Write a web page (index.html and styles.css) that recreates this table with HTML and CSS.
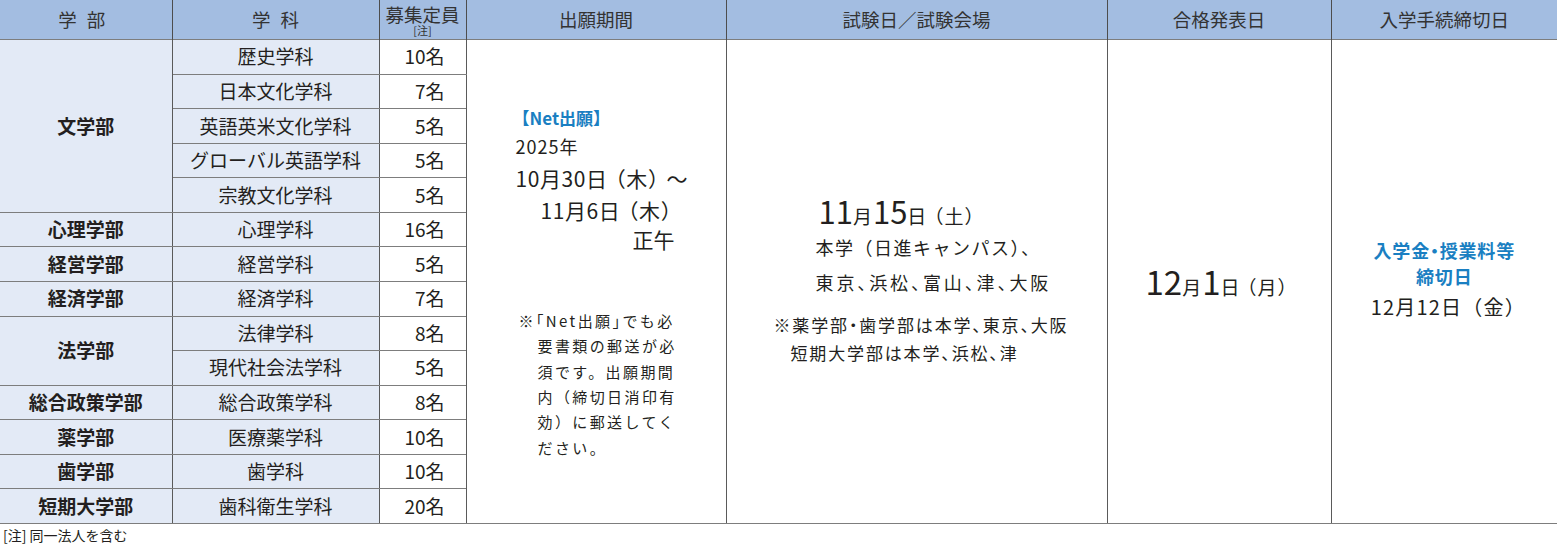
FILE: index.html
```html
<!DOCTYPE html>
<html lang="ja">
<head>
<meta charset="utf-8">
<title>入試日程</title>
<link rel="stylesheet" href="styles.css">
</head>
<body>
<table class="schedule">
  <colgroup>
    <col class="c-fac"><col class="c-dep"><col class="c-cap"><col class="c-app"><col class="c-exam"><col class="c-pass"><col class="c-proc">
  </colgroup>
  <thead>
    <tr>
      <th class="h-first h-spaced">学 部</th>
      <th class="h-spaced">学 科</th>
      <th class="h-cap"><span class="h-cap-main">募集定員</span><span class="h-cap-sub">[注]</span></th>
      <th>出願期間</th>
      <th>試験日／試験会場</th>
      <th>合格発表日</th>
      <th class="h-last">入学手続締切日</th>
    </tr>
  </thead>
  <tbody>
    <tr>
      <td class="fac" rowspan="5">文学部</td>
      <td class="dep">歴史学科</td>
      <td class="cap">10名</td>
      <td class="app" rowspan="14">
        <div class="app-box">
          <div class="net">【Net出願】</div>
          <div class="year">2025年</div>
          <div class="date1">10月30日<span class="pw">（木）</span>〜</div>
          <div class="date2">11月6日<span class="pw">（木）</span></div>
          <div class="noon">正午</div>
          <div class="app-note">
            <div class="note-first">※<span class="h">「</span>Net出願<span class="h">」</span>でも必</div>
            <div class="note-line">要書類の郵送が必</div>
            <div class="note-line">須です。出願期間</div>
            <div class="note-line">内（締切日消印有</div>
            <div class="note-line">効）に郵送してく</div>
            <div class="note-line">ださい。</div>
          </div>
        </div>
      </td>
      <td class="exam" rowspan="14">
        <div class="exam-box">
          <div class="exam-date"><span class="big">11</span>月<span class="big">15</span>日<span class="pw">（土）</span></div>
          <div class="loc loc1">本学（日進キャンパス）、</div>
          <div class="loc loc2">東京、浜松、富山、津、大阪</div>
          <div class="exam-note exam-note1">※薬学部・歯学部は本学、東京、大阪</div>
          <div class="exam-note exam-note2">短期大学部は本学、浜松、津</div>
        </div>
      </td>
      <td class="pass" rowspan="14">
        <span class="big-pass">12</span>月<span class="big-pass">1</span>日<span class="pw">（月）</span>
      </td>
      <td class="proc" rowspan="14">
        <div class="proc-blue">入学金<span class="h">・</span>授業料等</div>
        <div class="proc-blue">締切日</div>
        <div class="proc-date">12月12日（金）</div>
      </td>
    </tr>
    <tr><td class="dep">日本文化学科</td><td class="cap">7名</td></tr>
    <tr><td class="dep">英語英米文化学科</td><td class="cap">5名</td></tr>
    <tr><td class="dep">グローバル英語学科</td><td class="cap">5名</td></tr>
    <tr><td class="dep">宗教文化学科</td><td class="cap">5名</td></tr>
    <tr><td class="fac">心理学部</td><td class="dep">心理学科</td><td class="cap">16名</td></tr>
    <tr><td class="fac">経営学部</td><td class="dep">経営学科</td><td class="cap">5名</td></tr>
    <tr><td class="fac">経済学部</td><td class="dep">経済学科</td><td class="cap">7名</td></tr>
    <tr><td class="fac" rowspan="2">法学部</td><td class="dep">法律学科</td><td class="cap">8名</td></tr>
    <tr><td class="dep">現代社会法学科</td><td class="cap">5名</td></tr>
    <tr><td class="fac">総合政策学部</td><td class="dep">総合政策学科</td><td class="cap">8名</td></tr>
    <tr><td class="fac">薬学部</td><td class="dep">医療薬学科</td><td class="cap">10名</td></tr>
    <tr><td class="fac">歯学部</td><td class="dep">歯学科</td><td class="cap">10名</td></tr>
    <tr><td class="fac">短期大学部</td><td class="dep">歯科衛生学科</td><td class="cap">20名</td></tr>
  </tbody>
</table>
<p class="footnote">[注] 同一法人を含む</p>
</body>
</html>
```

FILE: styles.css
```css
html, body {
  margin: 0;
  padding: 0;
  background: #ffffff;
}

body {
  font-family: "Noto Sans CJK JP", "Noto Sans", sans-serif;
  color: #231f20;
}

.schedule {
  border-collapse: collapse;
  table-layout: fixed;
  width: 1557px;
}

.c-fac { width: 172px; }
.c-dep { width: 207px; }
.c-cap { width: 87px; }
.c-app { width: 260px; }
.c-exam { width: 381px; }
.c-pass { width: 224px; }
.c-proc { width: 226px; }

.schedule th {
  height: 39px;
  padding: 0;
  background: #a3bde1;
  color: #333333;
  font-weight: normal;
  font-size: 18.5px;
  line-height: 1;
  text-align: center;
  vertical-align: middle;
  border-left: 1px solid #4d4d4d;
  border-right: 1px solid #4d4d4d;
  border-top: none;
  border-bottom: none;
}

.schedule th.h-first { border-left: none; }
.schedule th.h-last { border-right: none; }

.schedule th.h-spaced {
  word-spacing: 6px;
}

.schedule th.h-first {
  padding-right: 8px;
}

.h-cap-main {
  display: block;
  font-size: 18.5px;
  line-height: 19px;
  padding-top: 1px;
}

.h-cap-sub {
  display: block;
  font-size: 11px;
  line-height: 12px;
}

.schedule tbody tr {
  height: 34.57px;
}

.schedule td {
  padding: 0;
  font-size: 19px;
  line-height: 1.2;
  text-align: center;
  vertical-align: middle;
  border-left: 1px solid #5a5a5a;
  border-right: 1px solid #5a5a5a;
  border-top: 1px solid #7d7d7d;
  border-bottom: 1px solid #7d7d7d;
}

.schedule td.fac {
  border-left: none;
  background: #e3eaf6;
  font-weight: bold;
}

.schedule td.dep {
  background: #e3eaf6;
}

.schedule td.cap {
  text-align: right;
  padding-right: 21px;
}

/* half-width punctuation */
.h {
  font-feature-settings: "halt";
}

/* full-width parentheses, slightly tightened */
.pw {
  margin: 0 -3px;
}

/* 出願期間 */
.schedule td.app {
  text-align: left;
  padding-left: 47px;
}

.net {
  color: #1a7fc2;
  font-weight: bold;
  font-size: 17px;
  line-height: 29px;
  margin-left: -1px;
}

.year {
  font-size: 18px;
  line-height: 29px;
  margin-left: 2px;
  letter-spacing: 1px;
}

.date1 {
  font-size: 21px;
  line-height: 35px;
  margin-left: 2px;
  letter-spacing: 0.6px;
}

.date2 {
  font-size: 21px;
  line-height: 29px;
  margin-left: 27px;
  letter-spacing: 0.6px;
}

.noon {
  font-size: 21px;
  line-height: 29px;
  margin-left: 119px;
}

.app-note {
  margin-top: 54px;
  font-size: 15px;
  line-height: 25.3px;
  letter-spacing: 2.4px;
}

.note-first { margin-left: 5px; }
.note-line { margin-left: 24px; }

/* 試験日 */
.schedule td.exam {
  text-align: left;
  padding-left: 47px;
}

.exam-date {
  font-size: 19px;
  line-height: 32px;
  margin-left: 45px;
  letter-spacing: 1px;
}

.big {
  font-size: 31px;
  letter-spacing: 0;
}

.loc {
  font-size: 18px;
  margin-left: 42px;
}

.loc1 {
  line-height: 30px;
  letter-spacing: 1.5px;
}

.loc2 {
  line-height: 40px;
  letter-spacing: 2.9px;
  font-feature-settings: "halt";
}

.exam-note {
  font-size: 17px;
  line-height: 28px;
  letter-spacing: 1.85px;
  font-feature-settings: "halt";
}

.exam-note1 {
  margin-top: 9px;
}

.exam-note2 {
  margin-left: 17px;
}

/* 合格発表日 */
.schedule td.pass {
  font-size: 19px;
  padding-left: 2px;
  letter-spacing: 1px;
}

.big-pass {
  font-size: 33px;
  letter-spacing: 0;
}

/* 入学手続 */
.schedule td.proc {
  border-right: none;
}

.proc-blue {
  color: #1a7fc2;
  font-weight: bold;
  font-size: 18px;
  line-height: 26px;
  letter-spacing: 0.8px;
}

.proc-date {
  font-size: 20px;
  line-height: 36px;
  letter-spacing: 1.2px;
  padding-left: 8px;
}

.footnote {
  margin: 0;
  padding: 2px 0 0 3px;
  font-size: 14px;
  line-height: 18px;
  color: #231f20;
}
```
